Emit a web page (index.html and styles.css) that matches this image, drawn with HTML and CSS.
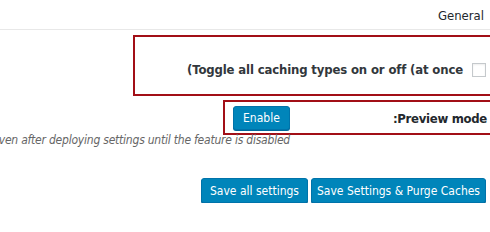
FILE: index.html
```html
<!DOCTYPE html>
<html lang="en" dir="rtl">
<head>
<meta charset="utf-8">
<title>General Settings</title>
<link rel="stylesheet" href="styles.css">
</head>
<body>
<div class="page">
  <div class="tabs"><span class="tab">General</span></div>
  <div class="toggle-box">
    <label class="toggle-label"><input type="checkbox" class="check"><span class="toggle-text" dir="ltr">(Toggle all caching types on or off (at once</span></label>
  </div>
  <div class="preview-box">
    <div class="preview-label">Preview mode:</div>
    <button class="btn" type="button">Enable</button>
  </div>
  <p class="desc">Use preview mode to test configuration scenarios prior to releasing them (deploy) on the actual site. Preview mode remains active even after deploying settings until the feature is disabled</p>
  <div class="actions">
    <button class="btn btn-lg btn-purge" type="button">Save Settings &amp; Purge Caches</button>
    <button class="btn btn-lg" type="button">Save all settings</button>
  </div>
</div>
</body>
</html>
```

FILE: styles.css
```css
html, body {
  margin: 0;
  padding: 0;
  background: #fff;
}
body {
  font-family: "DejaVu Sans Condensed", "DejaVu Sans", sans-serif;
  font-size: 13px;
  color: #23282d;
  width: 490px;
  height: 232px;
  overflow: hidden;
}
.page {
  width: 490px;
  overflow: hidden;
}
.tabs {
  height: 29px;
  border-bottom: 1px solid #e8e8e8;
  display: flex;
  align-items: center;
  padding-right: 6px;
}
.tab {
  font-size: 13px;
  color: #23282d;
  padding-top: 1px;
}
.toggle-box {
  margin-top: 5px;
  margin-left: 133px;
  border: 2px solid #a20f17;
  border-right: none;
  height: 57px;
  box-sizing: content-box;
  display: flex;
  align-items: flex-start;
}
.toggle-label {
  display: flex;
  align-items: center;
  gap: 9px;
  margin-top: 25px;
  margin-right: 4px;
  font-weight: bold;
  color: #32373c;
}
.toggle-text {
  letter-spacing: -0.15px;
}
.check {
  -webkit-appearance: none;
  appearance: none;
  width: 14px;
  height: 14px;
  margin: 0;
  border: 1px solid #c5c9cc;
  background: #fff;
  box-shadow: inset 0 1px 2px rgba(0,0,0,0.07);
  box-sizing: border-box;
}
.preview-box {
  margin-top: 4px;
  margin-left: 223px;
  border: 2px solid #a20f17;
  border-right: none;
  height: 30px;
  display: flex;
  align-items: center;
  padding-right: 3px;
  padding-left: 8px;
  padding-top: 1px;
  box-sizing: content-box;
}
.preview-label {
  flex: 1;
  font-weight: bold;
  color: #23282d;
  letter-spacing: -0.3px;
}
.btn {
  font-family: inherit;
  font-size: 12px;
  color: #fff;
  background: #0085ba;
  border: 1px solid #0073aa;
  border-radius: 3px;
  box-shadow: 0 1px 0 #006799;
  height: 24px;
  padding: 0 9px;
  margin: 0;
  line-height: 22px;
  cursor: pointer;
}
.desc {
  margin: -2px 200px 0 0;
  white-space: nowrap;
  font-style: italic;
  font-size: 12px;
  letter-spacing: -0.22px;
  line-height: 14px;
  color: #666;
}
.actions {
  margin-top: 31px;
  display: flex;
  gap: 3px;
  padding-right: 4px;
}
.btn-lg {
  height: 25px;
  padding: 0 8px;
}
.btn-purge {
  padding: 0 5px;
}
```
